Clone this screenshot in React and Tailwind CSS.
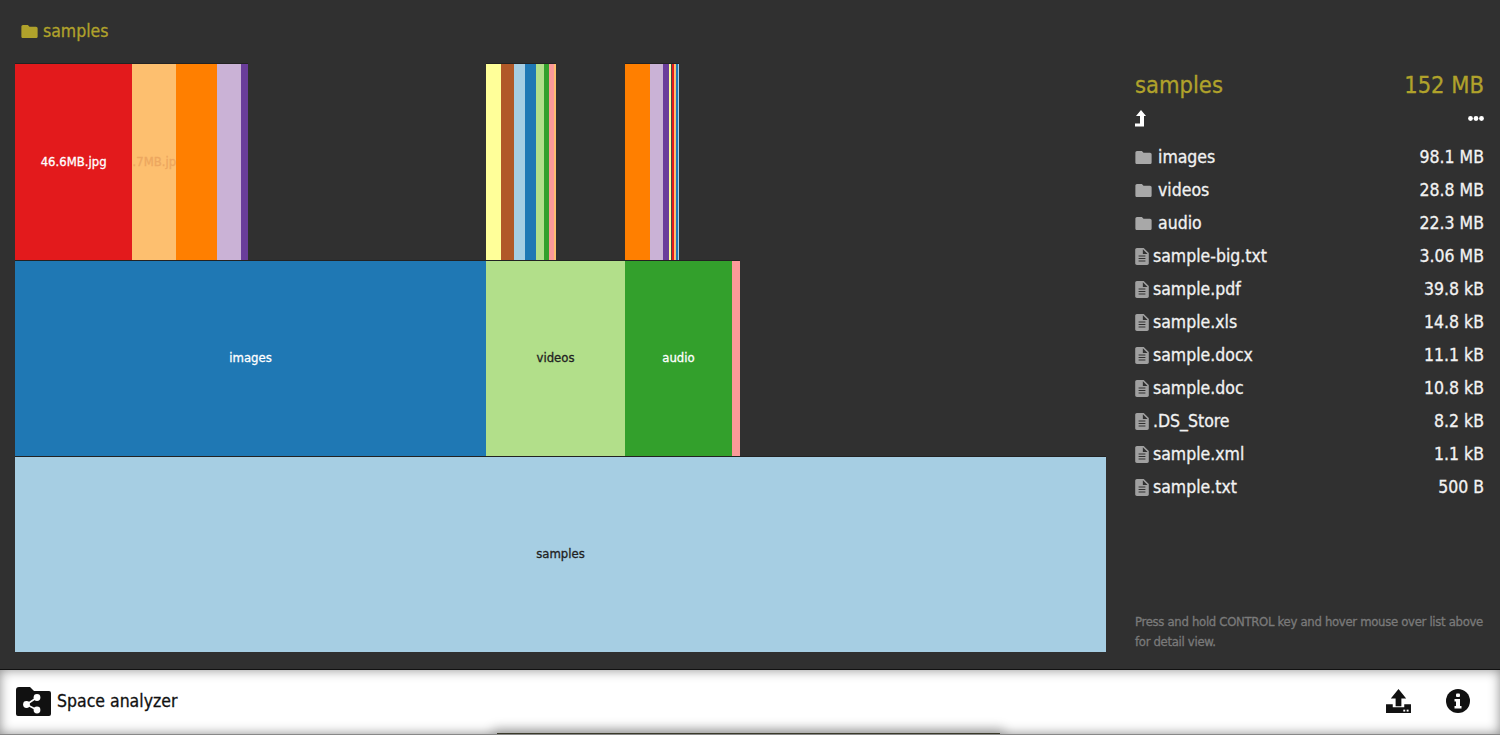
const FONT = "font-['DejaVu_Sans'] [font-stretch:condensed] [-webkit-text-stroke:0.3px_currentColor]";

const level1 = [
  { c: "w-[117.3px] bg-[#e31a1c] text-white pt-[2px]", t: "46.6MB.jpg" },
  { c: "w-[43.7px] bg-[#fdbf6f] text-[#eda75f] pt-[2px]", t: "…7MB.jpg" },
  { c: "w-[40.7px] bg-[#ff7f00]" },
  { c: "w-[24.3px] bg-[#cab2d6]" },
  { c: "w-[7.3px] bg-[#6a3d9a]" },
];
const level2 = [
  { c: "w-[14.7px] bg-[#ffff99]" },
  { c: "w-[13.3px] bg-[#b15928]" },
  { c: "w-[11px] bg-[#a6cee3]" },
  { c: "w-[10.3px] bg-[#1f78b4]" },
  { c: "w-[8.7px] bg-[#b2df8a]" },
  { c: "w-[4.7px] bg-[#33a02c]" },
  { c: "w-[5px] bg-[#fb9a99]" },
  { c: "w-[1.6px] bg-[#fdbf6f]" },
];
const level3 = [
  { c: "w-[25.3px] bg-[#ff7f00]" },
  { c: "w-[13px] bg-[#cab2d6]" },
  { c: "w-[6px] bg-[#6a3d9a]" },
  { c: "w-[2px] bg-[#ffff99]" },
  { c: "w-[1px] bg-[#444]" },
  { c: "w-[1.4px] bg-[#e31a1c]" },
  { c: "w-[2.3px] bg-[#fdbf6f]" },
  { c: "w-[1.7px] bg-[#1f78b4]" },
  { c: "w-[1.3px] bg-[#a6cee3]" },
];
const middle = [
  { c: "w-[471px] bg-[#1f78b4] text-white", t: "images" },
  { c: "w-[139px] bg-[#b2df8a] text-[#222]", t: "videos" },
  { c: "w-[107px] bg-[#33a02c] text-white", t: "audio" },
  { c: "w-[8px] bg-[#fb9a99]" },
];

const files = [
  ["folder", "images", "98.1 MB"],
  ["folder", "videos", "28.8 MB"],
  ["folder", "audio", "22.3 MB"],
  ["file", "sample-big.txt", "3.06 MB"],
  ["file", "sample.pdf", "39.8 kB"],
  ["file", "sample.xls", "14.8 kB"],
  ["file", "sample.docx", "11.1 kB"],
  ["file", "sample.doc", "10.8 kB"],
  ["file", ".DS_Store", "8.2 kB"],
  ["file", "sample.xml", "1.1 kB"],
  ["file", "sample.txt", "500 B"],
];

function FolderIcon({ className }) {
  return (
    <svg viewBox="2 4 20 16" className={className} fill="currentColor">
      <path d="M10 4H4c-1.1 0-1.99.9-1.99 2L2 18c0 1.1.9 2 2 2h16c1.1 0 2-.9 2-2V8c0-1.1-.9-2-2-2h-8l-2-2z" />
    </svg>
  );
}

function FileIcon({ className }) {
  return (
    <svg viewBox="4 2 16 20" className={className} fill="currentColor">
      <path d="M14 2H6c-1.1 0-2 .9-2 2v16c0 1.1.89 2 1.99 2H18c1.1 0 2-.9 2-2V8l-6-6zm2 16H8v-1.3h8V18zm0-3H8v-1.3h8V15zm0-3H8v-1.3h8V12zm-3-3V3.5L18.5 9H13z" />
    </svg>
  );
}

function Segs({ items }) {
  return items.map((s, i) => (
    <div
      key={i}
      className={`${s.c} shrink-0 h-full border-t border-[#222] overflow-hidden flex items-center justify-center pb-[2px] whitespace-nowrap text-[13px]`}
    >
      {s.t}
    </div>
  ));
}

export default function App() {
  return (
    <div className={`h-[735px] w-[1500px] flex flex-col overflow-hidden bg-[#303030] ${FONT}`}>
      <main className="h-[670px] shrink-0 flex pl-[15px] border-b border-[#111]">
        <div className="w-[1091px] shrink-0">
          <div className="h-[63px] pl-[6px] pt-[21px] flex items-start gap-[5px] text-[#b0a22b] text-[17.5px] leading-[20px]">
            <FolderIcon className="w-[17px] h-[13px] mt-[4px]" />
            <span>samples</span>
          </div>
          <div className="h-[197px] flex">
            <Segs items={level1} />
            <div className="w-[238px] shrink-0" />
            <Segs items={level2} />
            <div className="w-[69.6px] shrink-0" />
            <Segs items={level3} />
          </div>
          <div className="h-[196px] flex">
            <Segs items={middle} />
          </div>
          <div className="h-[196px] flex">
            <Segs items={[{ c: "w-[1091px] bg-[#a6cee3] text-[#222]", t: "samples" }]} />
          </div>
        </div>

        <aside className="w-[349px] shrink-0 ml-[29px] flex flex-col">
          <div className="mt-[70px] h-[32px] flex items-center justify-between text-[#b0a22b] text-[23.5px]">
            <span>samples</span>
            <span>152 MB</span>
          </div>
          <div className="h-[32px] flex items-center justify-between text-white">
            <svg viewBox="0 0 12 17" className="w-[12px] h-[17px]">
              <path d="M6 0 L11 6 H9 V16.5 H0 V13.5 H5 V6 H1 Z" fill="#fff" />
            </svg>
            <svg viewBox="0 0 16 5" className="w-[16px] h-[5px]" fill="#fff">
              <circle cx="2.5" cy="2.5" r="2.4" />
              <circle cx="8" cy="2.5" r="2.4" />
              <circle cx="13.5" cy="2.5" r="2.4" />
            </svg>
          </div>
          <ul className="mt-[7px]">
            {files.map(([kind, name, size]) => (
              <li key={name} className="h-[33px] flex items-center text-[#f2f2f2] text-[17.5px]">
                {kind === "folder" ? (
                  <FolderIcon className="w-[17px] h-[13px] text-[#a8a8a8] mr-[6px] shrink-0" />
                ) : (
                  <FileIcon className="w-[14px] h-[17px] text-[#a0a0a0] mr-[4px] shrink-0" />
                )}
                <span className="flex-1">{name}</span>
                <span>{size}</span>
              </li>
            ))}
          </ul>
          <p className="mt-auto mb-[17px] text-[#7a7a7a] text-[13px] tracking-[-0.32px] leading-[20px]">
            Press and hold CONTROL key and hover mouse over list above for detail view.
          </p>
        </aside>
      </main>

      <footer className="relative flex-1 bg-white shadow-[inset_0_0_12px_rgba(0,0,0,0.45)] flex items-center pl-[16px] pr-[30px] pb-[2px] overflow-hidden border-b border-[#888]">
        <svg viewBox="0 0 35 29" className="w-[35px] h-[29px] mr-[6px]">
          <path d="M3 0H14L18 4H33a2 2 0 0 1 2 2V27a2 2 0 0 1-2 2H2a2 2 0 0 1-2-2V3a3 3 0 0 1 3-3z" fill="#111" />
          <g fill="#fff">
            <circle cx="21" cy="10.5" r="3.4" />
            <circle cx="10.5" cy="17.5" r="3.4" />
            <circle cx="21" cy="23" r="3.4" />
            <path d="M21 10.5L10.5 17.5L21 23" fill="none" stroke="#fff" strokeWidth="1.6" />
          </g>
        </svg>
        <span className="text-[#111] text-[17.5px]">Space analyzer</span>
        <div className="ml-auto flex items-center gap-[35px]">
          <svg viewBox="0 0 26 25" className="w-[25px] h-[24px]">
            <path d="M13 0L21 10H16V18H10V10H5Z" fill="#111" />
            <path d="M0 16H7V19H19V16H26V25H0Z" fill="#111" />
            <rect x="18" y="21.5" width="2" height="2" fill="#fff" />
            <rect x="21.5" y="21.5" width="2" height="2" fill="#fff" />
          </svg>
          <svg viewBox="0 0 24 24" className="w-[24px] h-[24px]">
            <circle cx="12" cy="12" r="12" fill="#111" />
            <rect x="10" y="4.5" width="4" height="3.5" rx="1" fill="#fff" />
            <path d="M8.5 10H14V17H15.5V19.5H8.5V17H10V12.5H8.5Z" fill="#fff" />
          </svg>
        </div>
        <div className="absolute left-[497px] w-[503px] bottom-0 h-px bg-[#3a3a2a] shadow-[0_0_12px_4px_rgba(0,0,0,0.28)]" />
      </footer>
    </div>
  );
}
